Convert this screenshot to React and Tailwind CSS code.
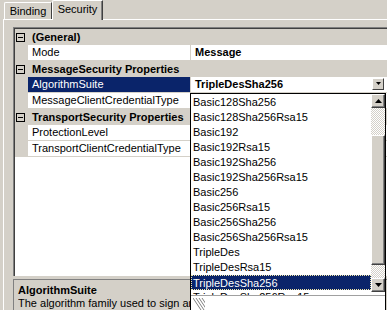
import React from "react";

const ROWS = [
  { type: "cat", label: "(General)" },
  { type: "prop", label: "Mode", value: "Message" },
  { type: "cat", label: "MessageSecurity Properties" },
  { type: "prop", label: "AlgorithmSuite", value: "TripleDesSha256", selected: true },
  { type: "prop", label: "MessageClientCredentialType", value: "" },
  { type: "cat", label: "TransportSecurity Properties" },
  { type: "prop", label: "ProtectionLevel", value: "" },
  { type: "prop", label: "TransportClientCredentialType", value: "" },
];

const SUITES = [
  "Basic128Sha256",
  "Basic128Sha256Rsa15",
  "Basic192",
  "Basic192Rsa15",
  "Basic192Sha256",
  "Basic192Sha256Rsa15",
  "Basic256",
  "Basic256Rsa15",
  "Basic256Sha256",
  "Basic256Sha256Rsa15",
  "TripleDes",
  "TripleDesRsa15",
  "TripleDesSha256",
  "TripleDesSha256Rsa15",
];

function Arrow({ down }) {
  return (
    <svg width="7" height="4" viewBox="0 0 7 4">
      {down ? <path d="M0 0h7L3.5 4z" fill="#000" /> : <path d="M0 4h7L3.5 0z" fill="#000" />}
    </svg>
  );
}

function ScrollButton({ down }) {
  return (
    <div className="h-[14px] flex items-center justify-center bg-[#d4d0c8] border border-t-white border-l-white border-r-[#404040] border-b-[#404040] shadow-[inset_-1px_-1px_#808080]">
      <Arrow down={down} />
    </div>
  );
}

// checkered scrollbar track
const TRACK = "bg-[repeating-conic-gradient(#d4d0c8_0_25%,#ffffff_0_50%)] bg-[length:2px_2px]";

function CategoryRow({ label }) {
  return (
    <div className="h-[16px] flex items-center bg-[#d4d0c8]">
      <div className="ml-[1px] w-[9px] h-[9px] border border-black flex items-center justify-center">
        <div className="w-[5px] h-px bg-black" />
      </div>
      <span className="ml-[7px] font-bold leading-[15px] text-black">{label}</span>
    </div>
  );
}

function PropRow({ label, value, selected }) {
  return (
    <div className="h-[16px] flex bg-[#d4d0c8]">
      <div className="w-[13px]" />
      <div
        className={`w-[162px] h-[15px] pl-[4px] leading-[15px] whitespace-nowrap overflow-hidden ${
          selected ? "bg-[#0a246a] text-white" : "bg-white text-black"
        }`}
      >
        {label}
      </div>
      <div className="w-px" />
      <div className="flex-1 h-[15px] bg-white pl-[4px] leading-[15px] font-bold text-black relative">
        {value}
        {selected && (
          <div className="absolute left-[181px] top-px w-[12px] h-[12px] flex items-center justify-center bg-[#d4d0c8] border border-t-white border-l-white border-r-[#404040] border-b-[#404040]">
            <svg width="5" height="4" viewBox="0 0 5 4">
              <path d="M0 0h5L2.5 3z" fill="#000" />
            </svg>
          </div>
        )}
      </div>
    </div>
  );
}

export default function App() {
  return (
    <div className="w-[387px] h-[310px] overflow-hidden bg-[#d4d0c8] relative font-['Liberation_Sans',Arial,sans-serif] text-[11px] text-black">
      {/* tab strip */}
      <div className="h-[19px] flex items-end pl-[4px]">
        <div className="h-[17px] w-[48px] border-l border-t border-r border-l-white border-t-white border-r-[#404040] rounded-tl-[2px] flex justify-center leading-[15px] pt-px">
          Binding
        </div>
        <div className="h-[20px] w-[51px] -mb-px relative z-10 bg-[#d4d0c8] border-l border-t border-r border-l-white border-t-white border-r-[#404040] shadow-[inset_-1px_0_#808080] rounded-tl-[2px] flex justify-center leading-[15px] pt-[1px]">
          Security
        </div>
      </div>

      {/* tab page */}
      <div className="ml-[3px] h-[291px] border-t border-l border-white pl-[9px] pt-[7px] flex flex-col">
        <div className="h-[253px] border-t border-l border-[#808080] flex flex-col">
          <div className="flex-1 border-t border-l border-[#404040] flex flex-col">
            {ROWS.map((r, i) =>
              r.type === "cat" ? (
                <CategoryRow key={i} label={r.label} />
              ) : (
                <PropRow key={i} label={r.label} value={r.value} selected={r.selected} />
              )
            )}
            <div className="flex-1 bg-white" />
          </div>
        </div>
        <div className="h-[3px]" />
        <div className="flex-1 border-t border-l border-[#808080] pl-[4px] pt-[4px] leading-[13px] whitespace-nowrap">
          <div className="font-bold">AlgorithmSuite</div>
          <div className="w-[172px] overflow-hidden">The algorithm family used to sign and encrypt messages.</div>
        </div>
      </div>

      {/* dropdown list */}
      <div className="absolute left-[190px] top-[93px] w-[196px] h-[230px] border border-black bg-white z-20">
        <div className="flex h-[201px]">
          <div className="flex-1 overflow-hidden pt-px">
            {SUITES.map((s) => {
              const sel = s === "TripleDesSha256";
              return (
                <div
                  key={s}
                  className={`h-[15px] pl-[2px] leading-[15px] whitespace-nowrap ${
                    sel
                      ? "bg-[#0a246a] text-white border border-dotted border-[#f3e9a8] pl-px leading-[13px]"
                      : "text-black"
                  }`}
                >
                  {s}
                </div>
              );
            })}
          </div>
          <div className="w-[14px] flex flex-col h-[198px]">
            <ScrollButton />
            <div className={`h-[27px] ${TRACK}`} />
            <div className="h-[130px] bg-[#d4d0c8] border border-t-white border-l-white border-r-[#404040] border-b-[#404040] shadow-[inset_-1px_-1px_#808080]" />
            <div className={`h-[13px] ${TRACK}`} />
            <ScrollButton down />
          </div>
        </div>
        <div className="border-t border-[#a0a0a0] h-[20px] pl-[2px] pt-[2px]">
          <svg width="12" height="14" viewBox="0 0 12 14">
            {[0, 3, 6, 9].map((o) => (
              <line key={o} x1={o} y1="0" x2={o + 8} y2="12" stroke="#808080" strokeWidth="1" />
            ))}
          </svg>
        </div>
      </div>
    </div>
  );
}
